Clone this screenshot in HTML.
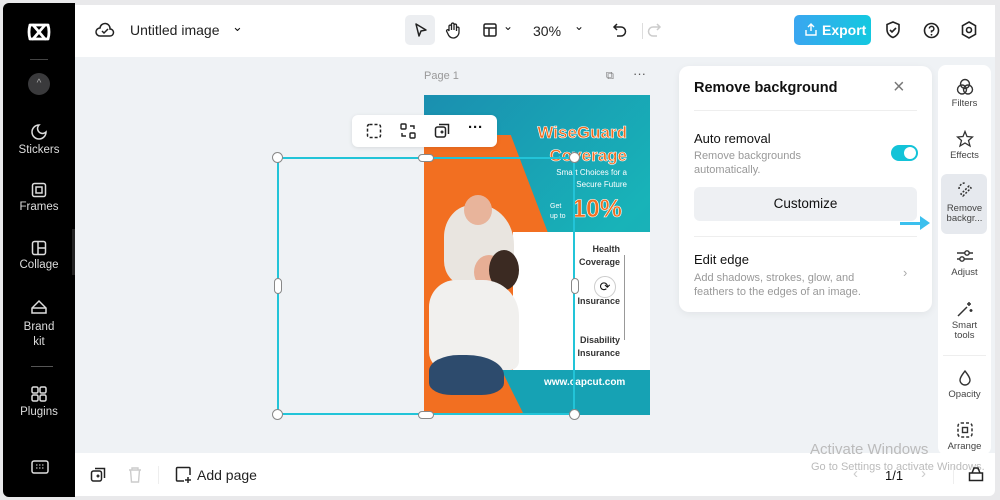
<!DOCTYPE html>
<html><head><meta charset="utf-8"><style>
*{box-sizing:border-box;margin:0;padding:0}
body{width:1000px;height:500px;background:#e9e9eb;font-family:"Liberation Sans",sans-serif;position:relative;overflow:hidden;color:#111}
.abs{position:absolute}
.side{left:3px;top:3px;width:72px;height:494px;background:#000;border-radius:6px 0 0 6px;color:#ddd;font-size:11.5px;text-align:center}
.side .it{position:absolute;left:0;width:72px}
.top{left:75px;top:5px;width:920px;height:52px;background:#fff}
.canvas{left:75px;top:57px;width:920px;height:396px;background:#eff2f5}
.bot{left:75px;top:453px;width:920px;height:43px;background:#fff;border-radius:0 0 6px 0}
.h{position:absolute;width:11px;height:11px;border:1.5px solid #888;background:#fff;border-radius:50%}
.hv{position:absolute;width:8px;height:16px;border:1.5px solid #888;background:#fff;border-radius:4px}
.hh{position:absolute;width:16px;height:8px;border:1.5px solid #888;background:#fff;border-radius:4px}
.rp{left:938px;top:65px;width:53px;height:390px;background:#fff;border-radius:8px;font-size:9.5px;color:#444;text-align:center}
.rp .it{position:absolute;left:0;width:53px;line-height:10px}
.panel{left:679px;top:66px;width:253px;height:246px;background:#fff;border-radius:10px;box-shadow:0 2px 8px rgba(0,0,0,.06)}
</style></head><body>
<div class="abs side">
 <svg class="abs" style="left:24px;top:18px" width="24" height="22" viewBox="0 0 24 22"><path d="M3 4h18M3 18h18M6 4l12 14M18 4L6 18M3 4q-2 7 0 14M21 4q2 7 0 14" stroke="#fff" stroke-width="2.8" fill="none" stroke-linecap="round"/></svg>
 <div class="abs" style="left:27px;top:56px;width:18px;height:1px;background:#444"></div>
 <div class="abs" style="left:25px;top:70px;width:22px;height:22px;border-radius:50%;background:#3a3a3c;color:#aaa;font-size:10px;line-height:22px">^</div>
 <div class="it" style="top:120px"><svg width="18" height="18" viewBox="0 0 18 18"><path d="M9 2a7 7 0 1 0 7 7a4 4 0 0 1-7-7z" stroke="#ddd" stroke-width="1.5" fill="none"/></svg><div>Stickers</div></div>
 <div class="it" style="top:179px"><svg width="16" height="16"><rect x="1.5" y="1.5" width="13" height="13" rx="2" stroke="#ddd" stroke-width="1.5" fill="none"/><rect x="5" y="5" width="6" height="6" stroke="#ddd" stroke-width="1.5" fill="none"/></svg><div>Frames</div></div>
 <div class="it" style="top:237px"><svg width="16" height="16"><rect x="1.5" y="1.5" width="13" height="13" rx="2" stroke="#ddd" stroke-width="1.5" fill="none"/><path d="M7 1.5v13M7 8h7.5" stroke="#ddd" stroke-width="1.5"/></svg><div>Collage</div></div>
 <div class="it" style="top:296px;line-height:15px"><svg width="18" height="16"><path d="M2 14h14v-5L9 2 2 9z" stroke="#ddd" stroke-width="1.5" fill="none"/><path d="M2 9h14" stroke="#ddd" stroke-width="1.5"/></svg><div>Brand<br>kit</div></div>
 <div class="abs" style="left:28px;top:363px;width:22px;height:1px;background:#555"></div>
 <div class="it" style="top:382px"><svg width="18" height="18"><g stroke="#ddd" stroke-width="1.5" fill="none"><rect x="2" y="2" width="6" height="6" rx="1.5"/><rect x="10" y="2" width="6" height="6" rx="1.5"/><rect x="2" y="10" width="6" height="6" rx="1.5"/><rect x="10" y="10" width="6" height="6" rx="1.5"/></g></svg><div>Plugins</div></div>
 <svg class="abs" style="left:28px;top:457px" width="18" height="14"><rect x="1" y="1" width="16" height="12" rx="2" stroke="#ddd" stroke-width="1.5" fill="none"/><path d="M5 5h8M5 8h8" stroke="#ddd" stroke-dasharray="1.5 1.5"/></svg>
</div>
<div class="abs" style="left:72px;top:229px;width:8px;height:46px;background:#222;border-radius:0 5px 5px 0"></div>
<div class="abs top">
 <svg class="abs" style="left:20px;top:17px" width="20" height="16"><path d="M5 14a4 4 0 0 1 0-8a5 5 0 0 1 10 1a3.5 3.5 0 0 1 0 7z M7 9l2 2 4-4" stroke="#222" stroke-width="1.5" fill="none"/></svg>
 <div class="abs" style="left:55px;top:17px;font-size:14px;color:#222">Untitled image</div>
 <div class="abs" style="left:157px;top:14px;font-size:13px">⌄</div>
 <div class="abs" style="left:330px;top:10px;width:30px;height:30px;background:#eceef1;border-radius:5px"></div>
 <svg class="abs" style="left:338px;top:17px" width="16" height="16"><path d="M3 2l10 6-5 1-2 5z" stroke="#222" stroke-width="1.5" fill="none" stroke-linejoin="round"/></svg>
 <svg class="abs" style="left:370px;top:16px" width="16" height="18"><path d="M4 10V5a1.3 1.3 0 0 1 2.5 0v4V3a1.3 1.3 0 0 1 2.5 0v6V4a1.3 1.3 0 0 1 2.5 0v6V7a1.3 1.3 0 0 1 2.5 0v4a6 6 0 0 1-6 6 6 6 0 0 1-5-4l-1.5-3a1.2 1.2 0 0 1 2-1z" stroke="#222" stroke-width="1.3" fill="none"/></svg>
 <svg class="abs" style="left:408px;top:18px" width="14" height="14"><rect x="1" y="1" width="12" height="12" rx="1.5" stroke="#222" stroke-width="1.5" fill="none"/><path d="M1 5h12M6 5v8" stroke="#222" stroke-width="1.5"/></svg>
 <div class="abs" style="left:428px;top:14px;font-size:12px">⌄</div>
 <div class="abs" style="left:458px;top:18px;font-size:14px;color:#222">30%</div>
 <div class="abs" style="left:499px;top:14px;font-size:12px">⌄</div>
 <div class="abs" style="left:567px;top:18px;width:1px;height:16px;background:#ddd"></div>
 <svg class="abs" style="left:537px;top:17px" width="16" height="16"><path d="M5 2L2 5l3 3M2 5h7a4.5 4.5 0 0 1 0 9H5" stroke="#222" stroke-width="1.5" fill="none"/></svg>
 <svg class="abs" style="left:571px;top:17px" width="16" height="16"><path d="M11 2l3 3-3 3M14 5H7a4.5 4.5 0 0 0 0 9h4" stroke="#ccc" stroke-width="1.5" fill="none"/></svg>
 <div class="abs" style="left:719px;top:10px;width:77px;height:30px;border-radius:5px;background:linear-gradient(90deg,#3aa6f0,#13c8e0);color:#fff;font-weight:bold;font-size:14px;line-height:30px;padding-left:28px">Export</div>
 <svg class="abs" style="left:730px;top:18px" width="12" height="13"><path d="M6 8V1M3 4l3-3 3 3M1 7v5h10V7" stroke="#fff" stroke-width="1.4" fill="none"/></svg>
 <svg class="abs" style="left:810px;top:16px" width="16" height="18"><path d="M8 1l6 2.5v5c0 4-3 7-6 8-3-1-6-4-6-8v-5z M5 9l2 2 4-4" stroke="#222" stroke-width="1.6" fill="none"/></svg>
 <svg class="abs" style="left:848px;top:17px" width="17" height="17"><circle cx="8.5" cy="8.5" r="7" stroke="#222" stroke-width="1.6" fill="none"/><path d="M6.3 6.5a2.3 2.3 0 1 1 2.2 2.5v1.5" stroke="#222" stroke-width="1.5" fill="none"/><circle cx="8.5" cy="12.8" r=".9" fill="#222"/></svg>
 <svg class="abs" style="left:886px;top:16px" width="16" height="18"><path d="M8 1l6.5 3.7v8.6L8 17l-6.5-3.7V4.7z" stroke="#222" stroke-width="1.6" fill="none"/><circle cx="8" cy="9" r="2.5" stroke="#222" stroke-width="1.6" fill="none"/></svg>
</div>
<div class="abs canvas"></div>
<div class="abs" style="left:424px;top:70px;font-size:11px;color:#999">Page 1</div>
<div class="abs" style="left:606px;top:70px;font-size:11px;color:#777">⧉</div>
<div class="abs" style="left:633px;top:66px;font-size:13px;color:#555">···</div>
<!-- poster -->
<div class="abs" style="left:424px;top:95px;width:226px;height:320px;background:linear-gradient(135deg,#1a8fb0,#18b3b8 60%,#1fa8b8);overflow:hidden">
 <div class="abs" style="left:0;top:40px;width:140px;height:280px;background:#f26f21;clip-path:polygon(0 0,62% 0,100% 50%,100% 100%,0 100%)"></div>
 <div class="abs" style="left:89px;top:137px;width:137px;height:138px;background:#fff"></div>
 <div class="abs" style="left:0;top:275px;width:226px;height:45px;background:#16a2b4"></div>
 <div class="abs" style="left:0;top:260px;width:100px;height:60px;background:#f26f21;clip-path:polygon(0 0,70% 0,100% 100%,0 100%)"></div>
 <div class="abs" style="left:20px;top:110px;width:70px;height:80px;background:#e9e5e0;border-radius:40% 50% 20% 30%"></div>
 <div class="abs" style="left:40px;top:100px;width:28px;height:30px;background:#e8b49b;border-radius:50%"></div>
 <div class="abs" style="left:50px;top:160px;width:30px;height:34px;background:#e7ae95;border-radius:50%"></div>
 <div class="abs" style="left:65px;top:155px;width:30px;height:40px;background:#3b2a22;border-radius:50%"></div>
 <div class="abs" style="left:5px;top:185px;width:90px;height:90px;background:#f1f0ee;border-radius:30% 40% 10% 20%"></div>
 <div class="abs" style="left:5px;top:260px;width:75px;height:40px;background:#2d4b6d;border-radius:40% 50% 30% 30%"></div>
 <div class="abs" style="left:95px;top:26px;width:108px;text-align:right;color:#f26f21;font-weight:bold;font-size:17px;line-height:23px;-webkit-text-stroke:.6px #fff">WiseGuard<br>Coverage</div>
 <div class="abs" style="left:110px;top:72px;width:93px;text-align:right;color:#fff;font-size:8px;line-height:12px">Smart Choices for a<br>Secure Future</div>
 <div class="abs" style="left:126px;top:107px;color:#fff;font-size:7px;line-height:10px">Get<br>up to</div>
 <div class="abs" style="left:148px;top:100px;color:#f26f21;font-weight:bold;font-size:25px;-webkit-text-stroke:.6px #fff">10%</div>
 <div class="abs" style="left:140px;top:148px;width:56px;text-align:right;color:#333;font-weight:bold;font-size:9px;line-height:13px">Health<br>Coverage<br><br><br>Insurance<br><br><br>Disability<br>Insurance</div>
 <div class="abs" style="left:200px;top:160px;width:1px;height:85px;background:#999"></div>
 <div class="abs" style="left:120px;top:282px;color:#fff;font-weight:bold;font-size:10px">www.capcut.com</div>
</div>
<!-- selection -->
<div class="abs" style="left:277px;top:157px;width:298px;height:258px;border:2px solid #22c4d8"></div>
<div class="h" style="left:272px;top:152px"></div><div class="h" style="left:569px;top:152px"></div>
<div class="h" style="left:272px;top:409px"></div><div class="h" style="left:569px;top:409px"></div>
<div class="hv" style="left:274px;top:278px"></div><div class="hv" style="left:571px;top:278px"></div>
<div class="hh" style="left:418px;top:154px"></div><div class="hh" style="left:418px;top:411px"></div>
<div class="abs" style="left:594px;top:276px;width:22px;height:22px;border-radius:50%;background:#fff;border:1px solid #ccc;text-align:center;line-height:20px;font-size:13px">⟳</div>
<div class="abs" style="left:352px;top:115px;width:145px;height:32px;background:#fff;border-radius:6px;box-shadow:0 1px 4px rgba(0,0,0,.1)"></div>
<svg class="abs" style="left:366px;top:123px" width="16" height="16"><rect x="1.5" y="1.5" width="13" height="13" rx="2" stroke="#222" stroke-width="1.5" stroke-dasharray="3 2" fill="none"/></svg>
<svg class="abs" style="left:400px;top:123px" width="16" height="16"><g stroke="#222" stroke-width="1.4" fill="none"><rect x="1" y="1" width="5" height="5" rx="1"/><rect x="10" y="10" width="5" height="5" rx="1"/><path d="M10 3h4v3M6 13H2v-3"/></g></svg>
<svg class="abs" style="left:434px;top:123px" width="16" height="16"><rect x="1.5" y="4" width="10" height="10" rx="2" stroke="#222" stroke-width="1.5" fill="none"/><path d="M5 1.5h9.5V11M6.5 9h3M8 7.5v3" stroke="#222" stroke-width="1.5" fill="none"/></svg>
<div class="abs" style="left:468px;top:119px;font-size:15px;font-weight:bold">···</div>
<!-- panel -->
<div class="abs panel">
 <div class="abs" style="left:15px;top:14px;font-size:14.5px;font-weight:bold">Remove background</div>
 <div class="abs" style="left:214px;top:10px;font-size:20px;color:#777">×</div>
 <div class="abs" style="left:15px;top:44px;width:223px;height:1px;background:#eee"></div>
 <div class="abs" style="left:15px;top:65px;font-size:13px">Auto removal</div>
 <div class="abs" style="left:15px;top:83px;font-size:11px;color:#999;line-height:14px">Remove backgrounds<br>automatically.</div>
 <div class="abs" style="left:212px;top:79px;width:27px;height:16px;border-radius:8px;background:#13c3d8"><div class="abs" style="left:13px;top:2px;width:12px;height:12px;border-radius:50%;background:#fff"></div></div>
 <div class="abs" style="left:15px;top:121px;width:223px;height:34px;background:#eef0f3;border-radius:6px;text-align:center;line-height:34px;font-size:13.5px">Customize</div>
 <div class="abs" style="left:15px;top:170px;width:223px;height:1px;background:#eee"></div>
 <div class="abs" style="left:15px;top:186px;font-size:13px">Edit edge</div>
 <div class="abs" style="left:15px;top:205px;font-size:11px;color:#999;line-height:14px">Add shadows, strokes, glow, and<br>feathers to the edges of an image.</div>
 <div class="abs" style="left:224px;top:199px;font-size:13px;color:#aaa">›</div>
</div>
<div class="abs" style="left:900px;top:222px;width:22px;height:3px;background:#3cc0ee"></div>
<div class="abs" style="left:920px;top:216px;width:0;height:0;border-left:10px solid #3cc0ee;border-top:7px solid transparent;border-bottom:7px solid transparent"></div>
<div class="abs rp">
 <div class="it" style="top:13px"><svg width="18" height="18"><g stroke="#333" stroke-width="1.4" fill="none"><circle cx="9" cy="6" r="4.5"/><circle cx="6" cy="11.5" r="4.5"/><circle cx="12" cy="11.5" r="4.5"/></g></svg><div>Filters</div></div>
 <div class="it" style="top:65px"><svg width="18" height="18"><path d="M9 1.5l2 5 5.5.5-4 3.5 1.5 5.5L9 13l-5 3 1.5-5.5-4-3.5 5.5-.5z" stroke="#333" stroke-width="1.3" fill="none"/></svg><div>Effects</div></div>
 <div class="abs" style="left:3px;top:109px;width:46px;height:60px;background:#e6e9ee;border-radius:6px"></div>
 <div class="it" style="top:116px"><svg width="18" height="18"><path d="M7 15l8-8-2-2-8 8zM3 8a6 6 0 0 1 6-6" stroke="#333" stroke-width="1.5" fill="none" stroke-dasharray="2 1.5"/></svg><div style="margin-top:2px">Remove<br>backgr...</div></div>
 <div class="it" style="top:182px"><svg width="18" height="18"><g stroke="#333" stroke-width="1.4" fill="none"><path d="M1 6h16M1 12h16"/><circle cx="11" cy="6" r="2.2" fill="#fff"/><circle cx="6" cy="12" r="2.2" fill="#fff"/></g></svg><div>Adjust</div></div>
 <div class="it" style="top:235px"><svg width="18" height="18"><path d="M2 16l9-9M13 2v4M11 4h4M15 9v3M13.5 10.5h3" stroke="#333" stroke-width="1.5" fill="none"/></svg><div>Smart<br>tools</div></div>
 <div class="abs" style="left:5px;top:290px;width:43px;height:1px;background:#eee"></div>
 <div class="it" style="top:304px"><svg width="18" height="18"><path d="M9 2C6 6 4 8.5 4 11a5 5 0 0 0 10 0c0-2.5-2-5-5-9z" stroke="#333" stroke-width="1.4" fill="none"/></svg><div>Opacity</div></div>
 <div class="it" style="top:356px"><svg width="18" height="18"><rect x="2" y="2" width="14" height="14" rx="3" stroke="#333" stroke-width="1.5" stroke-dasharray="3 2" fill="none"/><rect x="6.5" y="6.5" width="5" height="5" stroke="#333" stroke-width="1.4" fill="none"/></svg><div>Arrange</div></div>
</div>
<div class="abs bot">
 <svg class="abs" style="left:15px;top:14px" width="16" height="16"><rect x="1.5" y="4" width="10" height="10" rx="2" stroke="#222" stroke-width="1.5" fill="none"/><path d="M5 1.5h9.5V11M6.5 9h3M8 7.5v3" stroke="#222" stroke-width="1.5" fill="none"/></svg>
 <svg class="abs" style="left:53px;top:14px" width="14" height="16"><path d="M1 3h12M4 3V1h6v2M2.5 3l1 12h7l1-12" stroke="#ccc" stroke-width="1.4" fill="none"/></svg>
 <div class="abs" style="left:83px;top:13px;width:1px;height:18px;background:#eee"></div>
 <svg class="abs" style="left:100px;top:13px" width="17" height="17"><path d="M9 15H2.5a1 1 0 0 1-1-1V2.5a1 1 0 0 1 1-1H14a1 1 0 0 1 1 1V9M13 11v6M10 14h6" stroke="#222" stroke-width="1.5" fill="none"/></svg>
 <div class="abs" style="left:122px;top:14px;font-size:14px;color:#222">Add page</div>
 <div class="abs" style="left:735px;top:-12px;font-size:15px;color:#bbb">Activate Windows</div>
 <div class="abs" style="left:736px;top:8px;font-size:11px;color:#bbb">Go to Settings to activate Windows.</div>
 <div class="abs" style="left:778px;top:12px;font-size:15px;color:#ccc">‹</div>
 <div class="abs" style="left:810px;top:15px;font-size:13px">1/1</div>
 <div class="abs" style="left:846px;top:12px;font-size:15px;color:#ccc">›</div>
 <div class="abs" style="left:878px;top:13px;width:1px;height:18px;background:#eee"></div>
 <svg class="abs" style="left:893px;top:13px" width="16" height="16"><path d="M1.5 7h13v7.5h-13zM4 7l2-5h4l2 5" stroke="#222" stroke-width="1.5" fill="none"/></svg>
</div>
</body></html>
